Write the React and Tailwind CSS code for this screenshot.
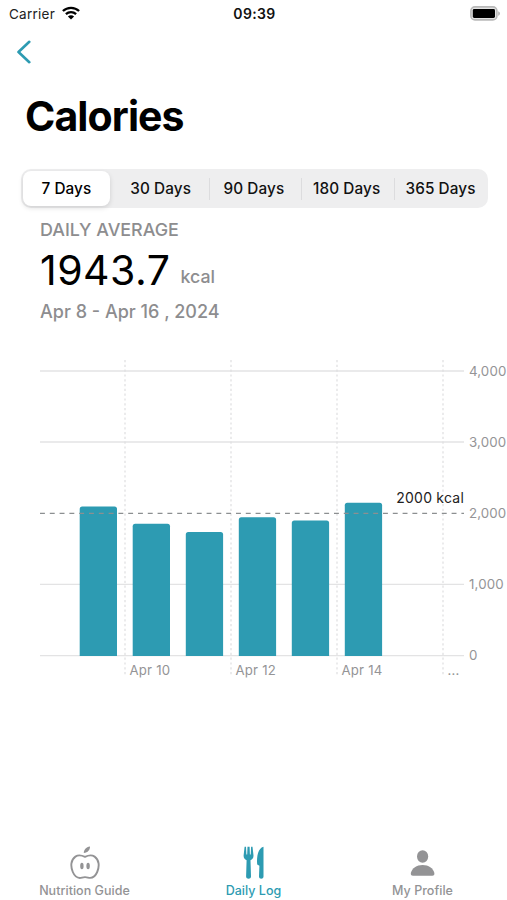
const ranges = ["7 Days", "30 Days", "90 Days", "180 Days", "365 Days"];

const bars = [
  { x: 79.7, y: 506.6 },
  { x: 132.7, y: 523.7 },
  { x: 185.8, y: 532 },
  { x: 238.8, y: 517.3 },
  { x: 291.8, y: 520.4 },
  { x: 344.8, y: 502.7 },
];

const yTicks = [
  { label: "4,000", y: 371 },
  { label: "3,000", y: 442 },
  { label: "2,000", y: 513.2 },
  { label: "1,000", y: 584.4 },
  { label: "0", y: 655.6 },
];

const xTicks = [
  { label: "Apr 10", x: 125 },
  { label: "Apr 12", x: 231 },
  { label: "Apr 14", x: 337 },
  { label: "...", x: 443 },
];

const StatusBar = () => {
  return (
    <div className="grid h-7 grid-cols-3 items-center pl-[9px] pr-[7px]">
      <div className="flex items-center gap-[7px]">
        <span className="text-[13.5px] tracking-[0.25px] text-[#222]">Carrier</span>
        <svg className="-mt-[2px]" width="18" height="14" viewBox="0 0 18 14" fill="none" stroke="#000" strokeWidth="2.3">
          <path d="M0.9 5C5.4 0.7 12.6 0.7 17.1 5" />
          <path d="M3.9 8.2C6.8 5.5 11.2 5.5 14.1 8.2" />
          <path d="M9 13.6L5.9 10.4C7.7 8.9 10.3 8.9 12.1 10.4Z" fill="#000" stroke="none" />
        </svg>
      </div>
      <span className="-mt-[2px] text-center text-[14px] font-semibold tracking-[0.35px] text-[#111]">09:39</span>
      <svg className="-mt-[2px] justify-self-end" width="30" height="15" viewBox="0 0 30 15">
        <rect x="0.9" y="0.9" width="26" height="13" rx="4" fill="#e4e4e4" stroke="#b9b9b9" strokeWidth="1.6" />
        <rect x="2.8" y="3" width="22.2" height="9" rx="1.4" fill="#000" />
        <path d="M28.2 5.2C30.5 6 30.5 9 28.2 9.8Z" fill="#b5b5b5" />
      </svg>
    </div>
  );
};

const RangePicker = () => {
  return (
    <div className="ml-[21px] mt-[33px] flex h-[39px] w-[467px] items-center rounded-[10px] bg-[#eeeeef] p-[2px]">
      {ranges.map((range, i) => (
        <div key={range} className="flex h-full flex-1 items-center last:w-[92px] last:flex-none">
          {i > 1 && <div className="h-[22px] w-px bg-[#dcdcde]" />}
          <button
            className={
              i === 0
                ? "mr-[6px] h-full flex-1 rounded-[8px] bg-white pt-[1px] text-[15.3px] font-medium tracking-[0.1px] shadow-[0_2px_5px_rgba(0,0,0,0.13)]"
                : i === 4
                  ? "h-full flex-1 whitespace-nowrap pt-[1px] text-[15.3px] font-medium tracking-[0.1px] text-[#111]"
                  : "h-full flex-1 whitespace-nowrap pr-[3px] pt-[1px] text-[15.3px] font-medium tracking-[0.1px] text-[#111]"
            }
          >
            {range}
          </button>
        </div>
      ))}
    </div>
  );
};

const CaloriesChart = () => {
  return (
    <svg className="mt-[26px] block" width="507" height="340" viewBox="0 350 507 340">
      {yTicks.map((tick) => (
        <g key={tick.label}>
          {tick.label !== "2,000" && (
            <line x1="40" x2="464" y1={tick.y} y2={tick.y} stroke="#e3e3e4" strokeWidth="1.4" />
          )}
          <text x="469" y={tick.y + 4.6} fontSize="13.3" letterSpacing="0.12" fill="#949496">
            {tick.label}
          </text>
        </g>
      ))}

      {xTicks.map((tick) => (
        <g key={tick.label}>
          <line
            x1={tick.x}
            x2={tick.x}
            y1="360"
            y2="676"
            stroke="#dededf"
            strokeWidth="1.2"
            strokeDasharray="2.2 2.6"
          />
          <text x={tick.x + 4.4} y="674.6" fontSize="13.2" letterSpacing="0.25" fill="#949496">
            {tick.label}
          </text>
        </g>
      ))}

      {bars.map((bar) => (
        <path
          key={bar.x}
          d={`M${bar.x} 656V${bar.y + 2.5}q0 -2.5 2.5 -2.5h32.3q2.5 0 2.5 2.5V656z`}
          fill="#2d9bb2"
        />
      ))}

      {/* daily goal */}
      <line x1="40" x2="464" y1="513.3" y2="513.3" stroke="#8c8f91" strokeWidth="1.3" strokeDasharray="4.9 4.9" />
      <text x="464" y="503.4" textAnchor="end" fontSize="14" letterSpacing="0.22" fill="#222">
        2000 kcal
      </text>
    </svg>
  );
};

const TabBar = () => {
  return (
    <nav className="mt-auto grid h-[60px] grid-cols-3 text-[12.5px] font-medium tracking-[0.03px] text-[#939395]">
      <div className="flex flex-col items-center">
        <svg width="30" height="34" viewBox="0 0 30 34" fill="none" stroke="currentColor" strokeWidth="1.9" className="mt-[6px]">
          <path d="M15 10.8C12 9.4 8.6 8.4 5.4 10.6C0.7 13.9 0.4 20.4 2.8 26C4.8 30.6 8.4 32.6 12 31.6C14 31 16 31 18 31.6C21.6 32.6 25.2 30.6 27.2 26C29.6 20.4 29.3 13.9 24.6 10.6C21.4 8.4 18 9.4 15 10.8Z" />
          <path d="M13.8 7C13.7 3.6 16 1.2 20 0.5C20.1 3.8 17.9 6.6 13.8 7Z" fill="currentColor" stroke="none" />
          <ellipse cx="11.9" cy="20" rx="1.7" ry="3.3" fill="currentColor" stroke="none" />
          <ellipse cx="18.1" cy="20" rx="1.7" ry="3.3" fill="currentColor" stroke="none" />
        </svg>
        <span className="mt-[2px]">Nutrition Guide</span>
      </div>

      <div className="flex flex-col items-center text-[#2d9bb2]">
        <svg width="22" height="34" viewBox="0 0 22 34" fill="currentColor" className="mt-[6px]">
          <path d="M1.6 0.7H3L3.4 8.5H4.2L4.5 0.7H6.6L6.9 8.5H7.7L8.1 0.7H9.5L10.5 9.5C10.6 12 9.3 13.4 7.5 14.2L8 30.5C8 33.4 3.1 33.4 3.1 30.5L3.6 14.2C1.8 13.4 0.5 12 0.6 9.5Z" />
          <path d="M20.5 0.7V30.5C20.5 33.4 16 33.4 16 30.5L16.4 19.8L14.2 18.6C13.6 10 15.1 2.2 20.5 0.7Z" />
        </svg>
        <span className="mt-[2px]">Daily Log</span>
      </div>

      <div className="flex flex-col items-center">
        <svg width="26" height="34" viewBox="0 0 26 34" fill="currentColor" className="mt-[6px]">
          <ellipse cx="12.6" cy="10.5" rx="5.6" ry="6.2" />
          <path d="M3 29.7C1.2 29.7 0.5 28.7 0.9 26.8C2 22.3 6.6 19 12.6 19C18.6 19 23.2 22.3 24.3 26.8C24.7 28.7 24 29.7 22.2 29.7Z" />
        </svg>
        <span className="mt-[2px]">My Profile</span>
      </div>
    </nav>
  );
};

const App = () => {
  return (
    <div className="flex h-[900px] w-[507px] flex-col overflow-hidden bg-white font-['Inter',sans-serif] text-black">
      <StatusBar />

      <button className="ml-4 mt-3 w-4">
        <svg width="16" height="24" viewBox="0 0 16 24" fill="none" stroke="#2d9bb2" strokeWidth="2.6" strokeLinecap="round" strokeLinejoin="round">
          <path d="M13.3 1.8L2.5 12L13.3 22.2" />
        </svg>
      </button>

      <h1 className="ml-[25px] mt-[32px] text-[41px] font-bold leading-[40px] tracking-[-0.9px]">Calories</h1>

      <RangePicker />

      <section className="ml-10 mt-[11px] text-[#8d8d8f]">
        <p className="text-[17.9px] font-medium leading-[22px]">DAILY AVERAGE</p>
        <div className="mt-[5px] flex h-[54px] items-start text-[41px] leading-[48px] tracking-[0.5px]">
          <span className="text-black">1943.7</span>
          <span className="ml-[10px] mt-[19px] text-[17.8px] font-medium leading-[24px] tracking-normal">kcal</span>
        </div>
        <p className="text-[18px] font-medium leading-6">Apr 8 - Apr 16 , 2024</p>
      </section>

      <CaloriesChart />
      <TabBar />
    </div>
  );
};

export default App;
